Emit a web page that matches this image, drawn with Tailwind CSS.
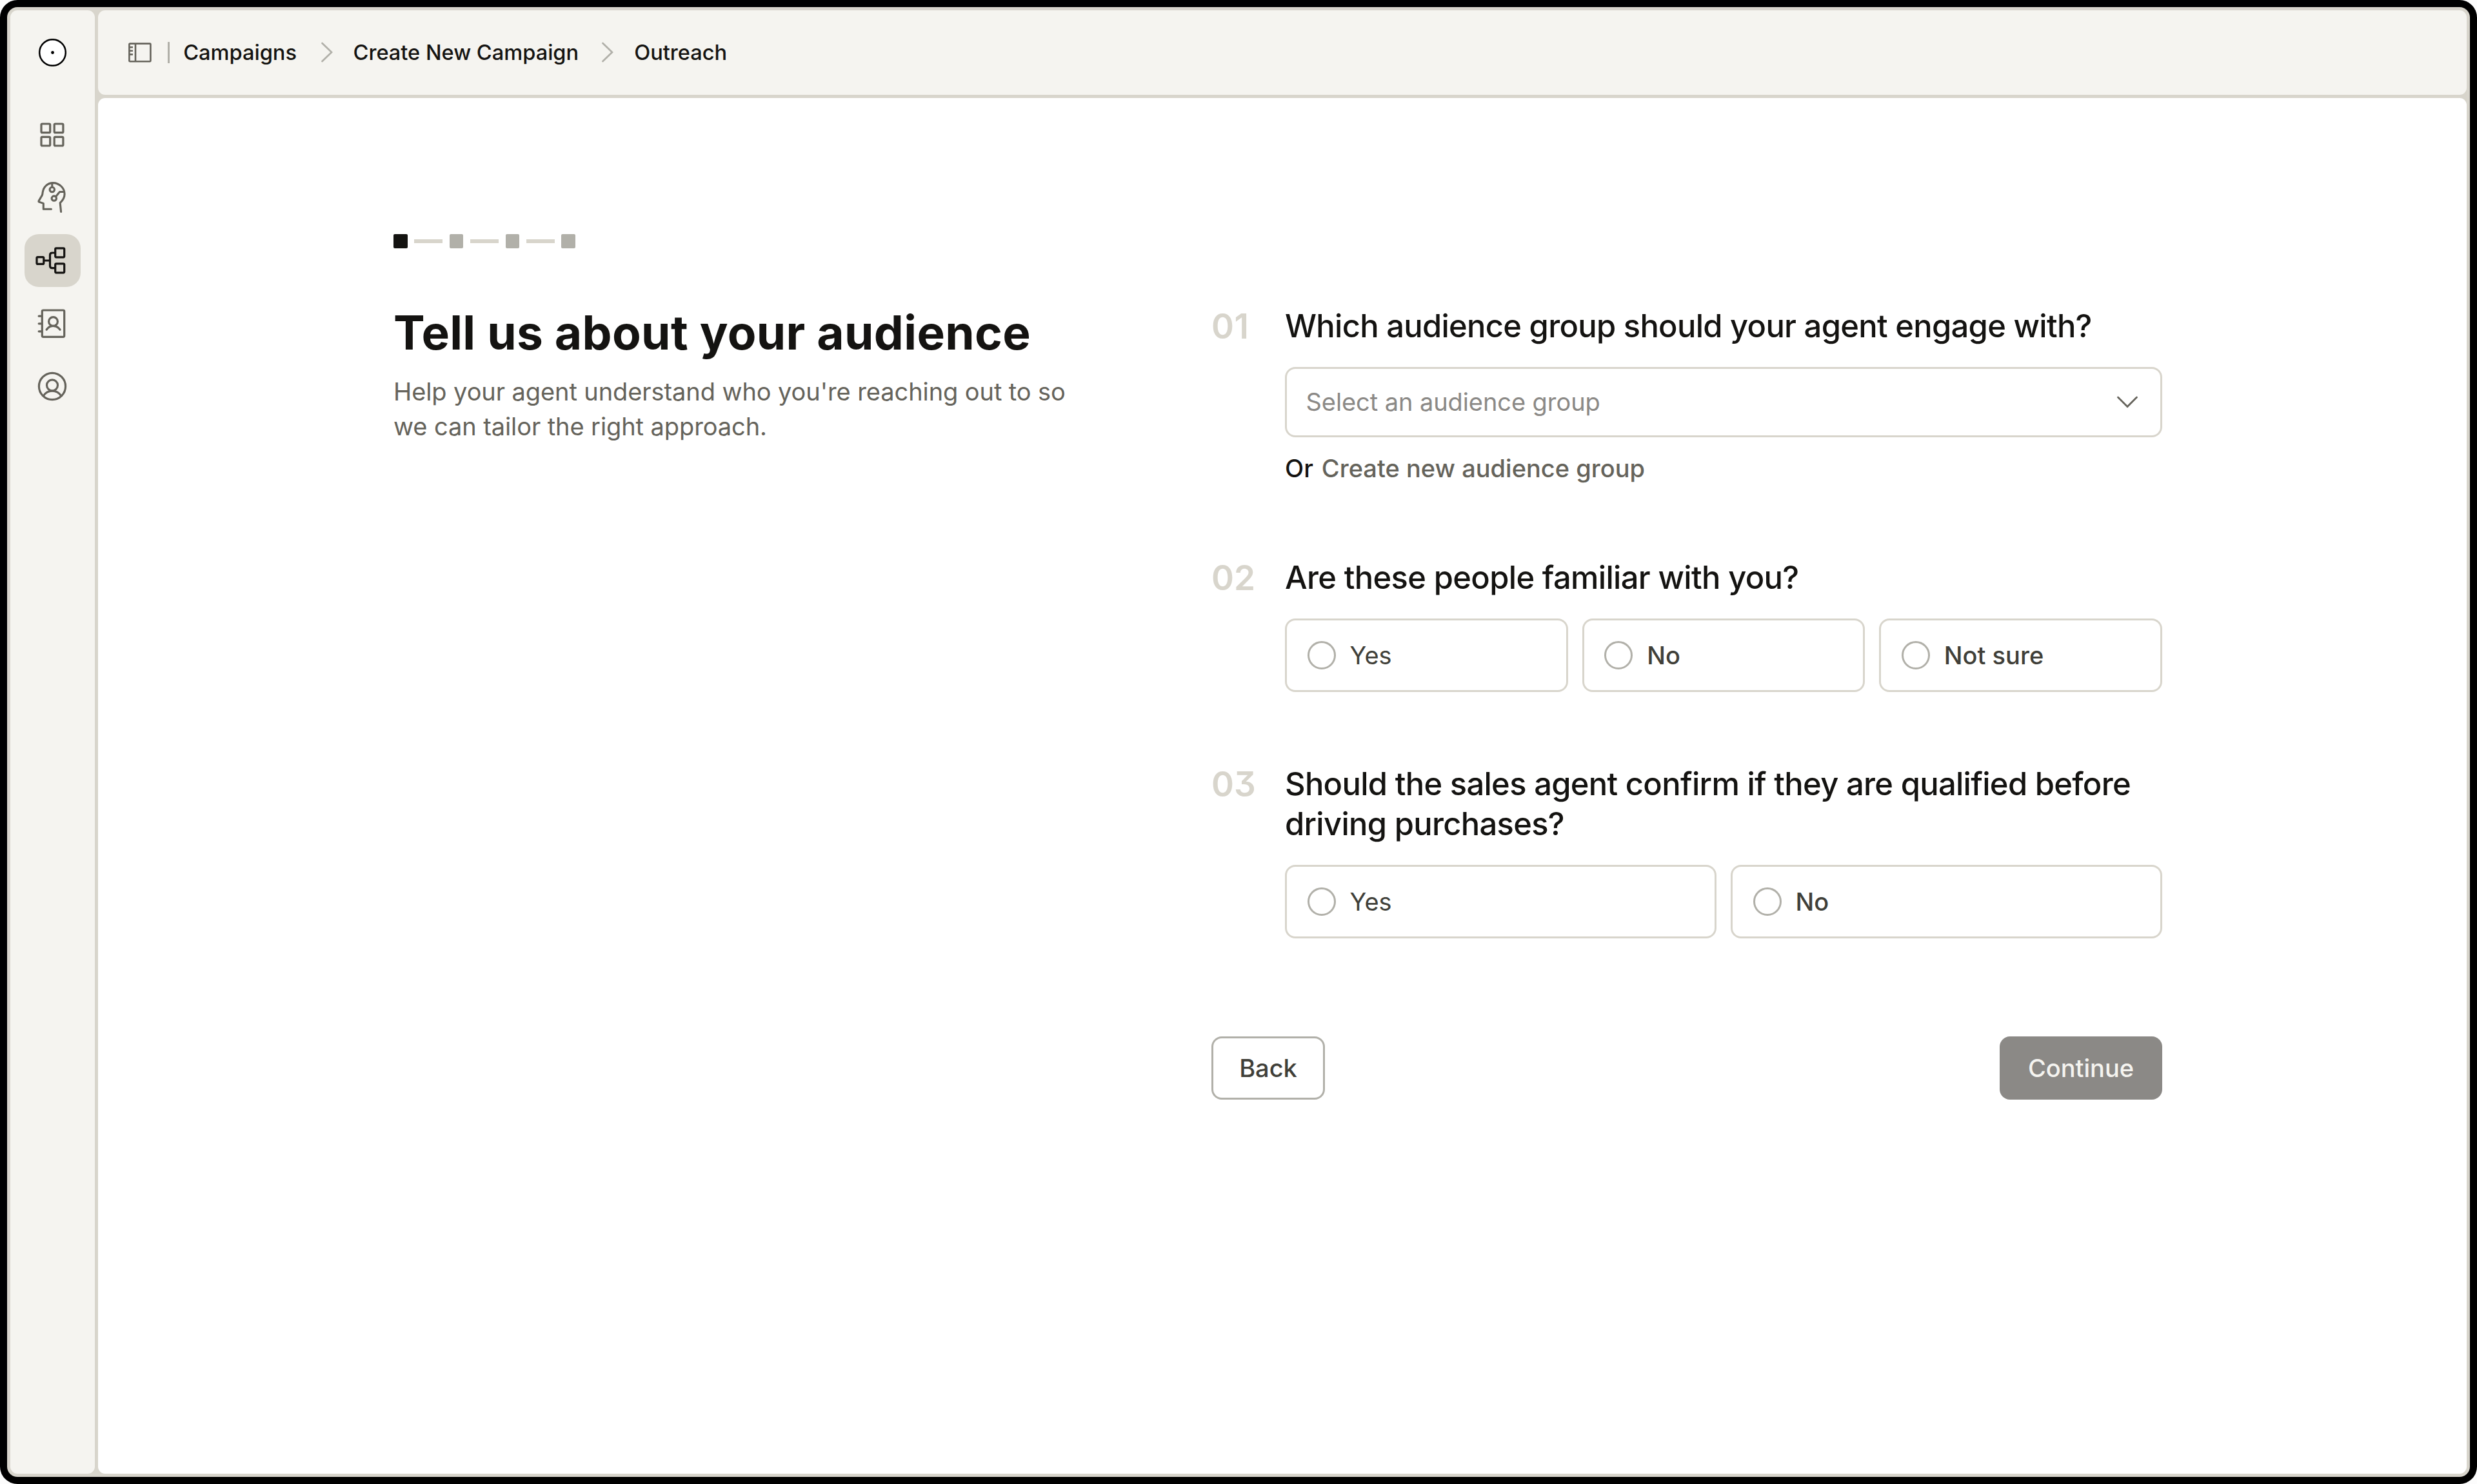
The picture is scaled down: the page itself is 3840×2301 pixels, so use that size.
<!DOCTYPE html>
<html lang="en">
<head>
<meta charset="utf-8">
<title>Create New Campaign</title>
<script src="https://cdn.jsdelivr.net/npm/@tailwindcss/browser@4"></script>
</head>
<body class="w-[3840px] h-[2301px] bg-[#fcfcfc] overflow-hidden font-['Inter',sans-serif] text-[#141311]">
<div class="w-[3840px] h-[2301px] rounded-[27px] bg-black p-[11px]">
<div class="w-full h-full rounded-[16px] bg-[#d8d5cc] p-[5px] flex gap-[5.5px]">
  <nav class="w-[130.5px] h-full rounded-[11px] bg-[#f5f4f0] pt-[44px] flex flex-col items-center text-[#65635b]">
    <svg class="w-[43px] h-[43px] mb-[65px]" viewBox="0 0 43 43"><circle cx="21.5" cy="21.5" r="20.3" fill="#fff" stroke="#000" stroke-width="2.5"/><circle cx="21.5" cy="21.5" r="2.4" fill="#000"/></svg>
    <div class="flex flex-col gap-[16.1px]">
      <a class="w-[87px] h-[81.5px] rounded-[22px] flex items-center justify-center"><svg class="w-12 h-12 overflow-visible" viewBox="0 0 48 48" fill="none" stroke="currentColor" stroke-width="3.2"><rect x="7" y="7" width="13.7" height="13.7" rx="1.5"/><rect x="27.2" y="7" width="13.7" height="13.7" rx="1.5"/><rect x="7" y="27.3" width="13.7" height="13.7" rx="1.5"/><rect x="27.2" y="27.3" width="13.7" height="13.7" rx="1.5"/></svg></a>
      <a class="w-[87px] h-[81.5px] rounded-[22px] flex items-center justify-center"><svg class="w-12 h-12 overflow-visible" viewBox="0 0 48 48" fill="none" stroke="currentColor" stroke-width="3.1" stroke-linecap="round" stroke-linejoin="round"><path d="M22.4 42.3H10.3V33.4L3.6 31.1Q2.7 30.6 3.2 29.4L8.4 20.5Q9 18.5 9.2 16C10.5 7.5 17 1.6 25.2 1.6C35 1.6 43.1 9.5 43.1 19C43.1 25 40 29 36.2 32.6L37.6 46.4"/><circle cx="23.8" cy="12" r="3.7"/><path d="M23.8 2V8M29.6 22.8L35.5 15.5H42"/><circle cx="26.8" cy="25.6" r="3.7"/></svg></a>
      <a class="w-[87px] h-[81.5px] rounded-[22px] bg-[#d8d5cc] text-[#141311] flex items-center justify-center"><svg class="w-12 h-12 overflow-visible" viewBox="0 0 48 48" fill="none" stroke="currentColor" stroke-width="3.2"><rect x="0" y="18.6" width="10.8" height="10.8" rx="1.5"/><rect x="28.7" y="4.8" width="14" height="14" rx="1.5"/><rect x="28.7" y="28.8" width="14" height="14" rx="1.5"/><path d="M10.8 24H20.5M28 12H24Q20.5 12 20.5 15.5V32.2Q20.5 35.7 24 35.7H28"/></svg></a>
      <a class="w-[87px] h-[81.5px] rounded-[22px] flex items-center justify-center"><svg class="w-12 h-12 overflow-visible" viewBox="0 0 48 48" fill="none" stroke="currentColor" stroke-width="3.2" stroke-linecap="round"><rect x="8.3" y="3" width="34.4" height="41.3" rx="1.8"/><path d="M3.2 12.2H7.5M3.2 23.8H7.5M3.2 35.8H7.5M15.2 33.2Q19 27.3 25.5 27.3T36 33.2"/><circle cx="25.5" cy="20.5" r="6.9"/></svg></a>
      <a class="w-[87px] h-[81.5px] rounded-[22px] flex items-center justify-center"><svg class="w-12 h-12 overflow-visible" viewBox="0 0 48 48" fill="none" stroke="currentColor" stroke-width="3.2"><circle cx="24" cy="24" r="20.6"/><circle cx="24" cy="22.3" r="8.5"/><path d="M10.2 39Q15 31.2 24 31.2T37.8 39"/></svg></a>
    </div>
  </nav>
  <div class="flex-1 flex flex-col gap-[5.5px]">
    <header class="h-[130.5px] rounded-[11px] bg-[#f5f4f0] pl-[47px] flex items-center text-[32.6px] leading-[44px] font-medium whitespace-nowrap">
      <svg class="w-9 h-[31px]" viewBox="0 0 36 31" fill="none" stroke="#65635b" stroke-width="2.6"><rect x="1.4" y="1.6" width="33" height="27.6" rx="1"/><path d="M11 1.6V29.2M1.4 7.2H7M1.4 12.8H7M1.4 18.4H7"/></svg>
      <span class="ml-[25px] w-[2.7px] h-[33px] bg-[#b1b0a9]"></span>
      <span class="ml-[21.5px] mb-[1px]">Campaigns</span>
      <svg class="ml-[37.5px] w-[18px] h-[32px]" viewBox="0 0 18 32" fill="none" stroke="#b1b0a9" stroke-width="2.7" stroke-linecap="round"><path d="M1.5 2L16 16L1.5 30"/></svg>
      <span class="ml-[32px] mb-[1px]">Create New Campaign</span>
      <svg class="ml-[36px] w-[18px] h-[32px]" viewBox="0 0 18 32" fill="none" stroke="#b1b0a9" stroke-width="2.7" stroke-linecap="round"><path d="M1.5 2L16 16L1.5 30"/></svg>
      <span class="ml-[32px] mb-[1px]">Outreach</span>
    </header>
    <main class="flex-1 rounded-[11px] bg-white pt-[211px] pl-[458px] pr-[472px]">
      <div class="flex items-center gap-[10.8px] h-[22px]">
        <i class="w-[21.7px] h-[21.7px] rounded-[2px] bg-[#141311]"></i><i class="w-[43.5px] h-[5.5px] bg-[#d8d5cc]"></i>
        <i class="w-[21.7px] h-[21.7px] rounded-[2px] bg-[#b1b0a9]"></i><i class="w-[43.5px] h-[5.5px] bg-[#d8d5cc]"></i>
        <i class="w-[21.7px] h-[21.7px] rounded-[2px] bg-[#b1b0a9]"></i><i class="w-[43.5px] h-[5.5px] bg-[#d8d5cc]"></i>
        <i class="w-[21.7px] h-[21.7px] rounded-[2px] bg-[#b1b0a9]"></i>
      </div>
      <div class="mt-[90px] flex justify-between">
        <section class="w-[1100px]">
          <h1 class="pt-[1px] text-[73px] leading-[80px] tracking-[0.36px] font-bold whitespace-nowrap">Tell us about your audience</h1>
          <p class="mt-[23.5px] text-[38px] leading-[54.3px] tracking-[-0.09px] text-[#65635b] whitespace-nowrap">Help your agent understand who you're reaching out to so<br>we can tailor the right approach.</p>
        </section>
        <section class="w-[1474px] text-[38px] leading-[54px]">
          <div class="flex">
            <div class="w-[114px] text-[53px] leading-[62.4px] tracking-[0.5px] font-semibold text-[#d8d5cc]">01</div>
            <div class="flex-1">
              <h2 class="text-[48.9px] leading-[62.4px] tracking-[-0.71px] font-medium whitespace-nowrap">Which audience group should your agent engage with?</h2>
              <div class="mt-[31.6px] h-[108.7px] border-[3px] border-[#d8d5cc] rounded-[16px] pl-[29.5px] pr-[35px] flex items-center justify-between text-[#8b8986]"><span class="tracking-[-0.08px]">Select an audience group</span>
                <svg class="w-8 h-5" viewBox="0 0 32 20" fill="none" stroke="#65635b" stroke-width="2.7" stroke-linecap="round"><path d="M1.5 3L16 17.5L30.5 3"/></svg></div>
              <p class="mt-[21.8px] flex gap-[13px] font-medium whitespace-nowrap"><span>Or</span><span class="text-[#65635b]">Create new audience group</span></p>
            </div>
          </div>
          <div class="mt-[111.4px] flex">
            <div class="w-[114px] text-[53px] leading-[62.4px] font-semibold text-[#d8d5cc]">02</div>
            <div class="flex-1">
              <h2 class="text-[48.9px] leading-[62.4px] tracking-[-0.66px] font-medium whitespace-nowrap">Are these people familiar with you?</h2>
              <div class="mt-[31.6px] grid grid-cols-3 gap-[22px] text-[#403f39] font-medium">
                <label class="h-[113.7px] border-[3px] border-[#d8d5cc] rounded-[16px] pl-[31.5px] flex items-center gap-[22px]"><i class="w-[44px] h-[44px] rounded-full border-[3px] border-[#b1b0a9]"></i><span class="font-normal">Yes</span></label>
                <label class="h-[113.7px] border-[3px] border-[#d8d5cc] rounded-[16px] pl-[31.5px] flex items-center gap-[22px]"><i class="w-[44px] h-[44px] rounded-full border-[3px] border-[#b1b0a9]"></i><span>No</span></label>
                <label class="h-[113.7px] border-[3px] border-[#d8d5cc] rounded-[16px] pl-[31.5px] flex items-center gap-[22px]"><i class="w-[44px] h-[44px] rounded-full border-[3px] border-[#b1b0a9]"></i><span>Not sure</span></label>
              </div>
            </div>
          </div>
          <div class="mt-[112.4px] flex">
            <div class="w-[114px] text-[53px] leading-[62.4px] font-semibold text-[#d8d5cc] [font-feature-settings:'cv09']">03</div>
            <div class="flex-1">
              <h2 class="text-[48.9px] leading-[62.4px] tracking-[-0.69px] font-medium whitespace-nowrap">Should the sales agent confirm if they are qualified before<br>driving purchases?</h2>
              <div class="mt-[31.6px] grid grid-cols-2 gap-[22px] text-[#403f39] font-medium">
                <label class="h-[113.7px] border-[3px] border-[#d8d5cc] rounded-[16px] pl-[31.5px] flex items-center gap-[22px]"><i class="w-[44px] h-[44px] rounded-full border-[3px] border-[#b1b0a9]"></i><span class="font-normal">Yes</span></label>
                <label class="h-[113.7px] border-[3px] border-[#d8d5cc] rounded-[16px] pl-[31.5px] flex items-center gap-[22px]"><i class="w-[44px] h-[44px] rounded-full border-[3px] border-[#b1b0a9]"></i><span>No</span></label>
              </div>
            </div>
          </div>
          <div class="mt-[152px] flex justify-between font-medium">
            <button class="w-[176px] h-[97.8px] border-[3px] border-[#b1b0a9] rounded-[16px] text-[#403f39]">Back</button>
            <button class="w-[252px] h-[97.8px] rounded-[16px] bg-[#8b8986] text-[#f5f4f0]">Continue</button>
          </div>
        </section>
      </div>
    </main>
  </div>
</div>
</div>
</body>
</html>
